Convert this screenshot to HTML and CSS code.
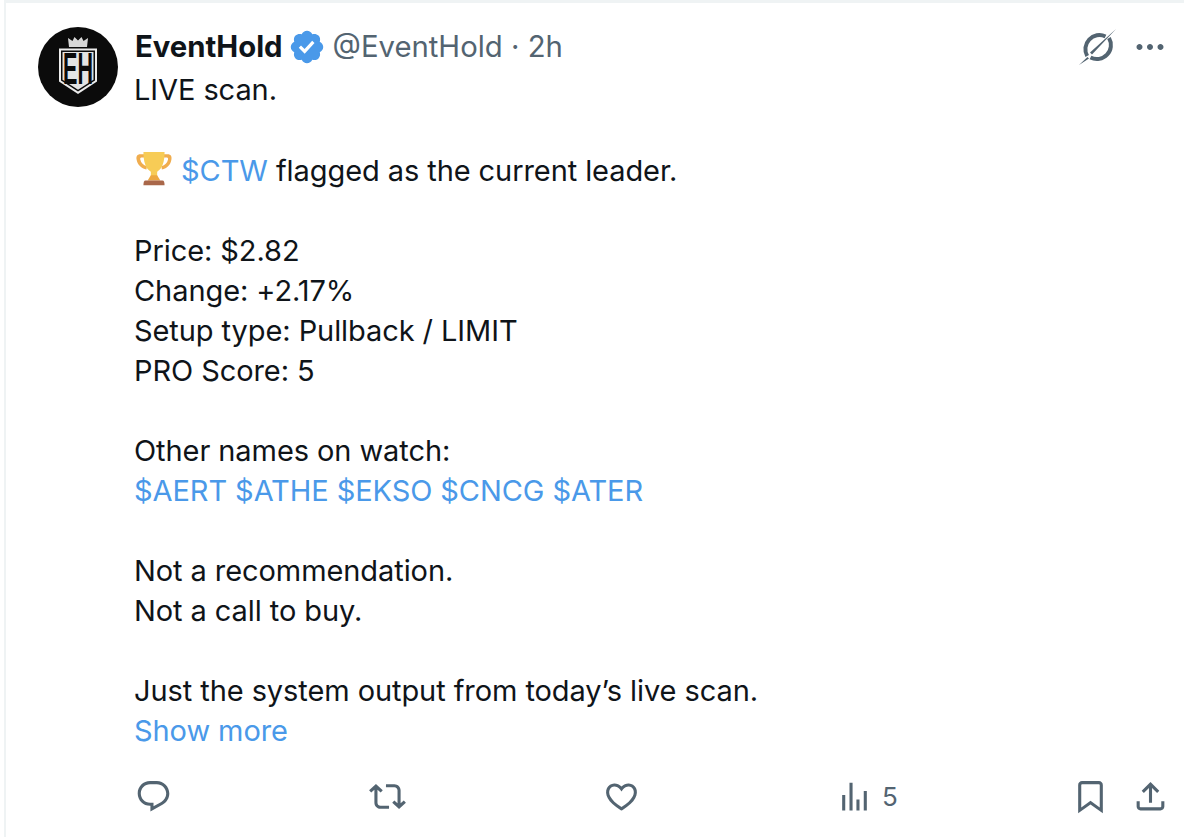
FILE: index.html
```html
<!DOCTYPE html>
<html lang="en">
<head>
<meta charset="utf-8">
<title>EventHold</title>
<link rel="stylesheet" href="styles.css">
</head>
<body>
<article class="tweet">
  <svg class="avatar" viewBox="0 0 80 80" aria-hidden="true">
    <circle cx="40" cy="40" r="40" fill="#0b0b0b"/>
    <path d="M31 20l-1-9 4.500 3 2-4 3.500 3.500L43.500 10l2 4 4.500-3-1 9z" fill="#d8d8d8"/>
    <path d="M21 21.500h38v33L40 67 21 54.500z" fill="#ececec"/>
    <path d="M23 23.500h34v30L40 64.500 23 53.500z" fill="#0b0b0b"/>
    <path d="M24.500 25h31v27.700L40 62.700 24.500 52.700z" fill="#e4e4e4"/>
    <text class="avatar-letters" text-anchor="middle" transform="translate(40 57) scale(.49 1)">EH</text>
  </svg>
  <div class="body">
    <header class="head">
      <span class="name">EventHold</span>
      <svg class="badge" viewBox="0 0 24 24" aria-hidden="true"><path d="M22.250 12c0-1.430-.880-2.670-2.190-3.340.460-1.390.200-2.900-.810-3.910s-2.520-1.270-3.910-.810c-.660-1.310-1.910-2.190-3.340-2.190s-2.670.880-3.330 2.190c-1.400-.460-2.910-.200-3.920.810s-1.260 2.520-.800 3.910c-1.310.670-2.200 1.910-2.200 3.340s.890 2.670 2.200 3.340c-.460 1.390-.210 2.900.800 3.910s2.520 1.260 3.910.810c.670 1.310 1.910 2.190 3.340 2.190s2.680-.880 3.340-2.190c1.390.450 2.900.200 3.910-.810s1.270-2.520.810-3.910c1.310-.670 2.190-1.910 2.190-3.340zm-11.710 4.200L6.800 12.460l1.410-1.420 2.260 2.260 4.800-5.230 1.470 1.360-6.200 6.770z"/></svg>
      <span class="meta">@EventHold · 2h</span>
      <span class="head-tools">
        <svg class="grok" viewBox="0 0 40 40" aria-hidden="true">
          <path d="M27.500 9.500A14 14 0 0 0 9.200 29M12.500 30.500A14 14 0 0 0 31 11" fill="none" stroke="#536471" stroke-width="4"/>
          <path d="M38 2L12 25.500l2 2zM1 38l10-6.500-1.500-1.500z" fill="#536471"/>
        </svg>
        <svg class="more" viewBox="0 0 24 24" aria-hidden="true"><path d="M3 12c0-1.100.900-2 2-2s2 .900 2 2-.900 2-2 2-2-.900-2-2zm9 2c1.100 0 2-.900 2-2s-.900-2-2-2-2 .900-2 2 .900 2 2 2zm7 0c1.100 0 2-.900 2-2s-.900-2-2-2-2 .900-2 2 .900 2 2 2z"/></svg>
      </span>
    </header>
    <div class="text">
      <p>LIVE scan.</p>
      <p class="trophy-line"><svg class="trophy" viewBox="0 0 36 36" aria-hidden="true">
        <path d="M5 4h26c3 0 4 2 3.500 5-.800 5-4 8.500-9 9.500l-.500-3c3.500-1 5.500-3.200 6.300-6.500.200-1-.100-2-1-2H6c-1 0-1.200 1-1 2 .800 3.300 2.800 5.500 6.300 6.500l-.500 3C6 17.500 2.300 14 1.500 9 1 6 2 4 5 4z" fill="#f0ad4e"/>
        <path d="M8 2h20c0 9-2 16-7 18.500V26h-6v-5.500C10 18 8 11 8 2z" fill="#f7cc56"/>
        <path d="M15 24h6l3 5H12z" fill="#eda83f"/>
        <path d="M10 29h16c1.500 0 2 1.500 2 4.500H8C8 30.500 8.500 29 10 29z" fill="#a9674a"/>
      </svg> <span class="link">$CTW</span> flagged as the current leader.</p>
      <p>Price: $2.82<br>Change: +2.17%<br>Setup type: Pullback / LIMIT<br>PRO Score: 5</p>
      <p>Other names on watch:<br><span class="link">$AERT $ATHE $EKSO $CNCG $ATER</span></p>
      <p>Not a recommendation.<br>Not a call to buy.</p>
      <p>Just the system output from today’s live scan.<br><span class="link">Show more</span></p>
    </div>
    <footer class="actions">
      <span class="action"><svg class="icon" viewBox="0 0 24 24" aria-hidden="true"><path d="M1.751 10c0-4.420 3.584-8 8.005-8h4.366c4.490 0 8.129 3.640 8.129 8.130 0 2.960-1.607 5.680-4.196 7.110l-8.054 4.460v-3.690h-.067c-4.490.100-8.183-3.510-8.183-8.010zm8.005-6c-3.317 0-6.005 2.690-6.005 6 0 3.370 2.770 6.080 6.138 6.010l.351-.010h1.761v2.300l5.087-2.810c1.951-1.080 3.163-3.130 3.163-5.360 0-3.390-2.744-6.130-6.129-6.130H9.756z"/></svg></span>
      <span class="action"><svg class="icon" viewBox="0 0 24 24" aria-hidden="true"><path d="M4.500 3.880l4.432 4.140-1.364 1.460L5.500 7.550V16c0 1.100.896 2 2 2H13v2H7.500c-2.209 0-4-1.790-4-4V7.550L1.432 9.480.068 8.020 4.500 3.880zM16.500 6H11V4h5.500c2.209 0 4 1.790 4 4v8.450l2.068-1.930 1.364 1.460-4.432 4.140-4.432-4.140 1.364-1.460 2.068 1.930V8c0-1.100-.896-2-2-2z"/></svg></span>
      <span class="action"><svg class="icon" viewBox="0 0 24 24" aria-hidden="true"><path d="M16.697 5.500c-1.222-.060-2.679.510-3.890 2.160l-.805 1.090-.806-1.090C9.984 6.010 8.526 5.440 7.304 5.500c-1.243.070-2.349.780-2.910 1.910-.552 1.120-.633 2.780.479 4.820 1.074 1.970 3.257 4.270 7.129 6.610 3.870-2.340 6.052-4.640 7.126-6.610 1.111-2.040 1.030-3.700.477-4.820-.561-1.130-1.666-1.840-2.908-1.910zm4.187 7.690c-1.351 2.480-4.001 5.120-8.379 7.670l-.503.300-.504-.300c-4.379-2.550-7.029-5.190-8.382-7.670-1.360-2.500-1.410-4.860-.514-6.670.887-1.790 2.647-2.910 4.601-3.010 1.651-.090 3.368.560 4.798 2.010 1.429-1.450 3.146-2.100 4.796-2.010 1.954.100 3.714 1.220 4.601 3.010.896 1.810.846 4.170-.514 6.670z"/></svg></span>
      <span class="action views"><svg class="icon" viewBox="0 0 24 24" aria-hidden="true"><path d="M8.750 21V3h2v18h-2zM18 21V8.500h2V21h-2zM4 21l.004-10h2L6 21H4zm9.248 0v-7h2v7h-2z"/></svg><span class="count">5</span></span>
      <span class="action-end">
        <svg class="icon" viewBox="0 0 24 24" aria-hidden="true"><path d="M4 4.500C4 3.120 5.119 2 6.500 2h11C18.881 2 20 3.120 20 4.500v18.440l-8-5.710-8 5.710V4.500zM6.500 4c-.276 0-.500.220-.500.500v14.560l6-4.290 6 4.290V4.500c0-.280-.224-.500-.500-.500h-11z"/></svg>
        <svg class="icon" viewBox="0 0 24 24" aria-hidden="true"><path d="M12 2.590l5.700 5.700-1.410 1.420L13 6.410V16h-2V6.410l-3.300 3.300-1.410-1.420L12 2.590zM21 15l-.020 3.510c0 1.380-1.120 2.490-2.500 2.490H5.500C4.110 21 3 19.880 3 18.500V15h2v3.500c0 .280.220.500.500.500h12.980c.280 0 .500-.220.500-.500L19 15h2z"/></svg>
      </span>
    </footer>
  </div>
</article>
</body>
</html>
```
FILE: styles.css
```css
html, body {
  margin: 0;
  padding: 0;
  background: #fff;
}
body {
  height: 839px;
  overflow: hidden;
  font-family: Inter, "Liberation Sans", sans-serif;
  color: #0f1419;
}
.tweet {
  margin-left: 4px;
  height: 837px;
  box-sizing: border-box;
  border-top: 3px solid #eff3f4;
  border-left: 2px solid #eff3f4;
  padding: 24px 0 0 32px;
  display: flex;
  gap: 16px;
  align-items: flex-start;
}
.avatar {
  width: 80px;
  height: 80px;
  flex: none;
}
.avatar-letters {
  font-family: "Liberation Sans", sans-serif;
  font-weight: 700;
  font-size: 44px;
  fill: #0b0b0b;
}
.body {
  flex: 1;
  min-width: 0;
}
.head {
  display: flex;
  align-items: center;
  height: 40px;
  margin-bottom: 3px;
  font-size: 29.3px;
  line-height: 40px;
}
.name {
  font-weight: 700;
  margin-left: 1px;
}
.badge {
  width: 38px;
  height: 38px;
  fill: #4a99e9;
  margin-left: 5px;
  margin-right: 7px;
}
.meta {
  color: #536471;
}
.head-tools {
  margin-left: auto;
  display: flex;
  align-items: center;
  gap: 14px;
  padding-right: 16px;
}
.grok {
  width: 40px;
  height: 40px;
}
.more {
  width: 36px;
  height: 36px;
  fill: #536471;
}
.text {
  font-size: 29px;
  line-height: 40px;
  letter-spacing: -0.08px;
}
.text p {
  margin: 0 0 40px;
}
.text p:last-child {
  margin-bottom: 0;
}
.trophy {
  width: 38px;
  height: 38px;
  vertical-align: -7px;
  margin-left: 1px;
}
.link {
  color: #4a99e9;
}
.actions {
  display: flex;
  align-items: center;
  margin-top: 23px;
  margin-left: 1px;
  height: 44px;
}
.action {
  width: 234px;
  flex: none;
  display: flex;
  align-items: center;
}
.icon {
  width: 37px;
  height: 37px;
  fill: #536471;
  flex: none;
}
.views .count {
  font-size: 26px;
  color: #536471;
  margin-left: 9px;
}
.views .icon {
  margin-left: -1px;
}
.action-end {
  margin-left: auto;
  display: flex;
  gap: 23px;
  padding-right: 15px;
}
```
